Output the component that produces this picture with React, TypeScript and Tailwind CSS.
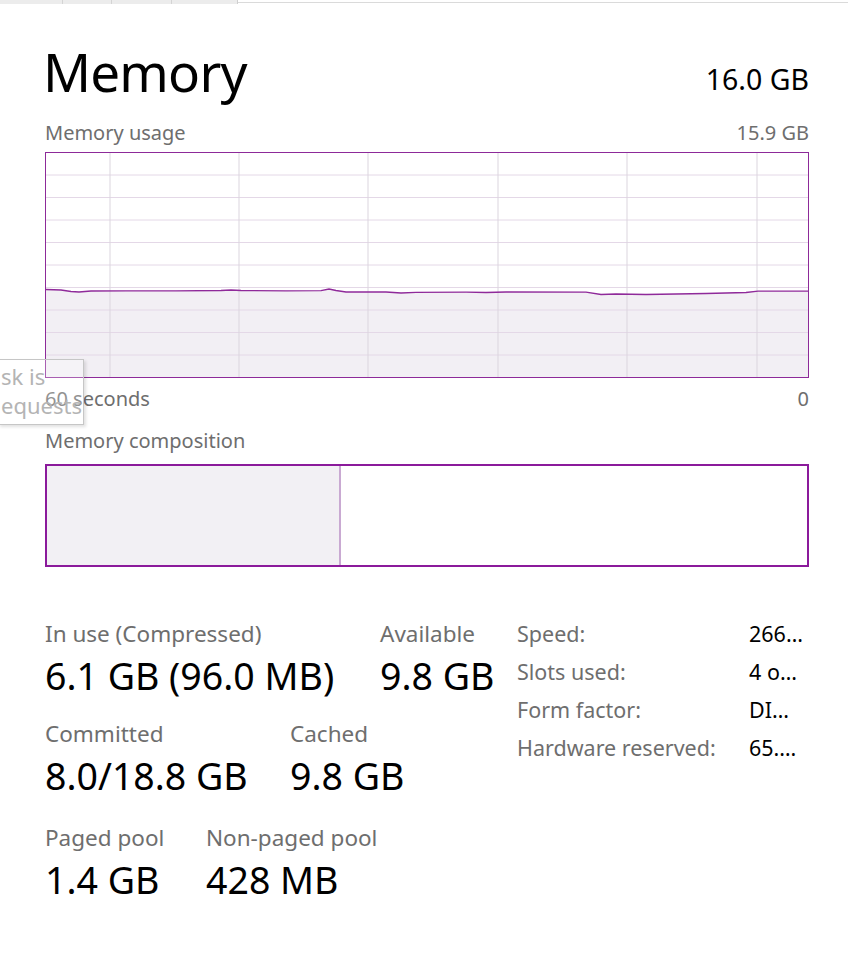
const linePoints: [number, number][] = [
  [0, 289.5], [15, 290], [25, 291.5], [33, 292], [45, 291], [80, 290.8], [130, 290.8],
  [175, 290.5], [185, 290], [195, 290.5], [240, 290.8], [275, 290.6], [283, 289],
  [290, 290.5], [300, 292], [340, 292], [355, 293], [370, 292.3], [420, 292.2],
  [440, 292.5], [460, 292], [540, 292.2], [555, 294.5], [570, 294], [600, 294.5],
  [630, 294], [660, 293.5], [700, 292.5], [712, 291.2], [762, 291.2],
];

const gridRows = [22, 44.5, 67, 89.5, 112, 134.5, 157, 179.5, 202];
const gridCols = [64, 193, 322, 452, 581, 711];

function UsageGraph() {
  const pts = linePoints.map(([x, y]) => `${x},${y - 153}`).join(' ');
  return (
    <div className="h-[226px] border border-[#8d2a99] bg-white">
      <svg className="block h-full w-full" viewBox="0 0 762 224" preserveAspectRatio="none">
        <polygon points={`0,224 ${pts} 762,224`} fill="#f2eff4" />
        {gridRows.map((y) => (
          <line key={y} x1="0" x2="762" y1={y} y2={y} stroke="#e4d8e7" strokeWidth="1" />
        ))}
        {gridCols.map((x) => (
          <line key={x} x1={x} x2={x} y1="0" y2="224" stroke="#dbd5de" strokeWidth="1" />
        ))}
        <polyline points={pts} fill="none" stroke="#8f2a9a" strokeWidth="1.3" />
      </svg>
    </div>
  );
}

function Stat({ label, value, width }: { label: string; value: string; width?: string }) {
  return (
    <div className={width}>
      <div className="text-[22.5px] leading-[26px] text-[#6e6e6e]">{label}</div>
      <div className="mt-[7px] text-[37.5px] leading-[44px] text-black">{value}</div>
    </div>
  );
}

// values as the narrow column shows them, already cut short
const specs = [
  { label: 'Speed:', value: '266…' },
  { label: 'Slots used:', value: '4 o…' },
  { label: 'Form factor:', value: 'DI…' },
  { label: 'Hardware reserved:', value: '65.…' },
];

export default function App() {
  return (
    <div
      className="relative h-[954px] w-[848px] overflow-hidden bg-white"
      style={{ fontFamily: '"Noto Sans", "Open Sans", sans-serif' }}
    >
      {/* tab strip remnant */}
      <div className="flex h-[4px]">
        <div className="flex w-[238px] bg-[#ececec]">
          <div className="w-[63px] border-r border-[#d4d4d4]" />
          <div className="w-[49px] border-r border-[#d4d4d4]" />
          <div className="w-[60px] border-r border-[#d4d4d4]" />
          <div className="flex-1 border-r border-[#cfcfcf]" />
        </div>
        <div className="h-[3px] flex-1 border-b border-[#dadada]" />
      </div>

      <div className="pl-[45px] pr-[39px] pt-[40px]">
        <div className="flex items-start justify-between">
          <h1 className="-ml-[2px] text-[53px] font-normal leading-[56px] tracking-[-0.8px] text-black">
            Memory
          </h1>
          <div className="mt-[20px] text-[28.5px] leading-[30px] text-black">16.0 GB</div>
        </div>

        <div className="mt-[21px] flex justify-between text-[20px] leading-[24px] text-[#6e6e6e]">
          <span>Memory usage</span>
          <span>15.9 GB</span>
        </div>

        <div className="mt-[7px]">
          <UsageGraph />
        </div>

        <div className="mt-[9px] flex justify-between text-[20px] leading-[24px] text-[#6e6e6e]">
          <span>60 seconds</span>
          <span>0</span>
        </div>

        <div className="mt-[18px] text-[20px] leading-[24px] text-[#6e6e6e]">Memory composition</div>

        <div className="mt-[11px] flex h-[103px] border-2 border-[#8b1a9b]">
          <div className="w-[294px] border-r-2 border-[#c9a9d2] bg-[#f2f0f4]" />
          <div className="flex-1 bg-white" />
        </div>

        <div className="mt-[48px] flex items-start">
          <div className="w-[472px] pt-[6px]">
            <div className="flex">
              <Stat label="In use (Compressed)" value="6.1 GB (96.0 MB)" width="w-[335px]" />
              <Stat label="Available" value="9.8 GB" />
            </div>
            <div className="mt-[23px] flex">
              <Stat label="Committed" value="8.0/18.8 GB" width="w-[245px]" />
              <Stat label="Cached" value="9.8 GB" />
            </div>
            <div className="mt-[27px] flex">
              <Stat label="Paged pool" value="1.4 GB" width="w-[161px]" />
              <Stat label="Non-paged pool" value="428 MB" />
            </div>
          </div>

          <div className="flex flex-col text-[21.5px] leading-[38px]">
            {specs.map((s) => (
              <div key={s.label} className="flex">
                <span className="w-[232px] text-[#6e6e6e]">{s.label}</span>
                <span className="text-black">{s.value}</span>
              </div>
            ))}
          </div>
        </div>
      </div>

      {/* fading tooltip over the left edge */}
      <div className="absolute left-[-2px] top-[359px] h-[66px] w-[86px] border border-[#c6c6c6] bg-white/25 shadow-[2px_2px_3px_rgba(0,0,0,0.12)]">
        <div className="pl-[2px] pt-[1px] text-[22px] leading-[30px] text-[#b4b4b4]">
          <div>sk is</div>
          <div className="-mt-[1px]">equests</div>
        </div>
      </div>
    </div>
  );
}
